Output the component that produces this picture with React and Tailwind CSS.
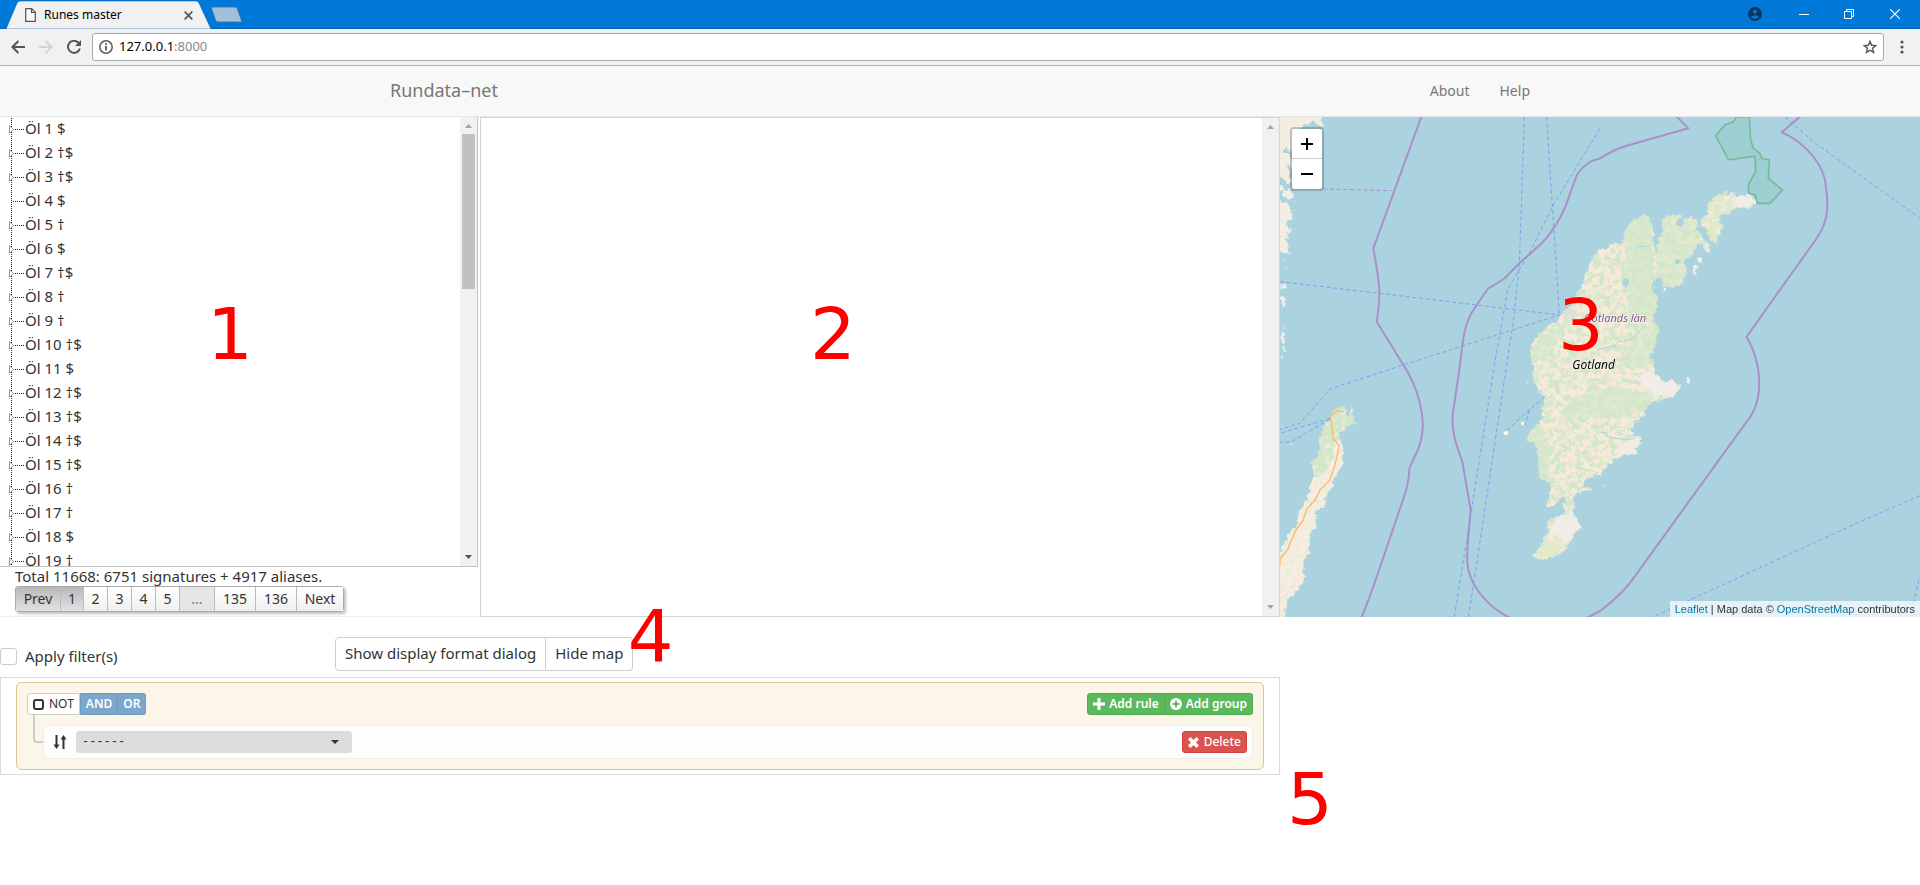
import React from 'react';

const rows = [
  ['1', '$'], ['2', '†$'], ['3', '†$'], ['4', '$', true], ['5', '†'], ['6', '$'], ['7', '†$'],
  ['8', '†'], ['9', '†'], ['10', '†$'], ['11', '$'], ['12', '†$'], ['13', '†$'], ['14', '†$'],
  ['15', '†$'], ['16', '†'], ['17', '†'], ['18', '$'], ['19', '†'],
];

const pages = [
  ['Prev', 'w-11 bg-linear-to-b from-[#b8b8b8] to-[#e2e2e2]'],
  ['1', 'w-[23px] bg-linear-to-b from-[#b8b8b8] to-[#e2e2e2]'],
  ['2', 'w-6 bg-linear-to-b from-white to-[#efefef]'],
  ['3', 'w-6 bg-linear-to-b from-white to-[#efefef]'],
  ['4', 'w-6 bg-linear-to-b from-white to-[#efefef]'],
  ['5', 'w-6 bg-linear-to-b from-white to-[#efefef]'],
  ['...', 'w-[35px] bg-[#e6e6e6] text-[#777]'],
  ['135', 'w-[41px] bg-linear-to-b from-white to-[#efefef]'],
  ['136', 'w-[41px] bg-linear-to-b from-white to-[#efefef]'],
  ['Next', 'w-[47px] bg-linear-to-b from-white to-[#efefef]'],
];

function Marker({ children, className }) {
  return (
    <span className={`pointer-events-none absolute z-10 font-['DejaVu_Sans',sans-serif] text-[72px] leading-[72px] text-[#ff0000] ${className}`}>
      {children}
    </span>
  );
}

function Scrollbar({ thumb, active }) {
  const arrow = active ? '#505050' : '#a3a3a3';
  return (
    <div className="flex w-[17px] shrink-0 flex-col items-center justify-between bg-[#f1f1f1]" aria-hidden="true">
      <div className="flex w-full flex-col items-center">
        <svg className="h-[17px] w-[17px]" viewBox="0 0 17 17"><path d="M5 11l3.5-4 3.5 4z" fill="#a3a3a3" /></svg>
        {thumb && <div className="h-[155px] w-[13px] bg-[#c1c1c1]" />}
      </div>
      <svg className="h-[17px] w-[17px]" viewBox="0 0 17 17"><path d="M5 6l3.5 4L12 6z" fill={arrow} /></svg>
    </div>
  );
}

function TitleBar() {
  return (
    <div className="flex h-[29px] items-center justify-between border-b border-[#0062b8] bg-[#0078d7]">
      <div className="flex h-full items-center">
        <div className="relative ml-1.5 h-[29px] w-[206px] shrink-0">
          <svg className="absolute inset-0 h-full w-full" viewBox="0 0 206 29" aria-hidden="true">
            <path d="M0 29 L11 3 Q12 1 14 1 H190 Q192 1 193 3 L205 29z" fill="#f1f1f1" stroke="#0063b1" strokeWidth=".6" />
          </svg>
          <div className="relative flex h-full items-center pl-[19px] pt-0.5 text-[12px] text-black">
            <svg className="h-[14px] w-[11px]" viewBox="0 0 11 14" fill="#fafafa" stroke="#555" strokeWidth="1.2" aria-hidden="true">
              <path d="M.7.7h6l3.6 3.6v9H.7zM6.5.7v3.8h3.8" />
            </svg>
            <span className="ml-2">Runes master</span>
            <button className="absolute right-4 flex h-4 w-4 items-center justify-center" aria-label="Close tab">
              <svg className="h-[9px] w-[9px]" viewBox="0 0 9 9" stroke="#555" strokeWidth="1.7"><path d="M.7.7l7.6 7.6M8.3.7L.7 8.3" /></svg>
            </button>
          </div>
        </div>
        <button aria-label="New tab" className="-ml-0.5 h-[17px] w-8 shrink-0">
          <svg className="h-[17px] w-8" viewBox="0 0 32 17"><path d="M1 1H25Q27 1 27.5 3L32 16H8Q6 16 5.5 14z" fill="#a3bfd9" stroke="#2a6fb3" strokeWidth=".8" /></svg>
        </button>
      </div>
      <div className="flex items-center pr-5">
        <button aria-label="Profile" className="mr-[37px]">
          <svg className="h-[14px] w-[14px]" viewBox="0 0 14 14"><circle cx="7" cy="7" r="7" fill="#0a3558" /><circle cx="7" cy="4.6" r="2.1" fill="#0078d7" /><path d="M2.8 10Q7 6.6 11.2 10Q7 14 2.8 10z" fill="#0078d7" /></svg>
        </button>
        <button aria-label="Minimise" className="mr-[35px]">
          <svg className="h-[10px] w-[10px]" viewBox="0 0 10 10"><path d="M0 5.5h10" stroke="#fff" /></svg>
        </button>
        <button aria-label="Restore" className="mr-[36px]">
          <svg className="h-[10px] w-[10px]" viewBox="0 0 10 10" fill="none" stroke="#fff"><path d="M.5 2.5h7v7h-7zM2.5 2.5v-2h7v7h-2" /></svg>
        </button>
        <button aria-label="Close window">
          <svg className="h-[10px] w-[10px]" viewBox="0 0 10 10" stroke="#fff" strokeWidth="1.1"><path d="M0 0l10 10M10 0L0 10" /></svg>
        </button>
      </div>
    </div>
  );
}

function Toolbar() {
  return (
    <div className="flex h-[37px] items-center border-b border-[#b3b3b3] bg-[#f1f1f1] pl-[11px]">
      <button aria-label="Back"><svg className="h-[14px] w-[14px]" viewBox="0 0 14 14" fill="none" stroke="#555" strokeWidth="2"><path d="M14 7H1.6M7.4 1L1.4 7l6 6" /></svg></button>
      <button aria-label="Forward" className="ml-[14px]"><svg className="h-[14px] w-[14px]" viewBox="0 0 14 14" fill="none" stroke="#d3d3d3" strokeWidth="2"><path d="M0 7h12.4M6.6 1l6 6-6 6" /></svg></button>
      <button aria-label="Reload" className="ml-[14px]">
        <svg className="h-[14px] w-[14px]" viewBox="0 0 14 14"><path d="M11.6 3A6 6 0 1 0 12.8 8.4" fill="none" stroke="#555" strokeWidth="2" /><path d="M14 0v6H8z" fill="#555" /></svg>
      </button>
      <div className="ml-[11px] flex h-7 flex-1 items-center rounded-[3px] border border-[#a9a9a9] bg-white pl-1.5 pr-1.5">
        <svg className="h-[14px] w-[14px]" viewBox="0 0 14 14" aria-hidden="true"><circle cx="7" cy="7" r="6.2" fill="none" stroke="#5a5a5a" strokeWidth="1.5" /><path d="M6.1 6h1.8v4.6H6.1zM6.1 3.2h1.8V5H6.1z" fill="#5a5a5a" /></svg>
        <div className="ml-1.5 flex-1 text-[13px] text-black">127.0.0.1<span className="text-[#888]">:8000</span></div>
        <button aria-label="Bookmark">
          <svg className="h-[14px] w-[14px]" viewBox="0 0 14 14" fill="none" stroke="#555" strokeWidth="1.4"><path d="M7 1.4l1.6 3.9 4.2.3-3.2 2.7 1 4.1L7 10.2l-3.6 2.2 1-4.1L1.2 5.6l4.2-.3z" /></svg>
        </button>
      </div>
      <button aria-label="Menu" className="flex w-9 justify-center">
        <svg className="h-[14px] w-1" viewBox="0 0 4 14" fill="#555"><circle cx="2" cy="2" r="1.6" /><circle cx="2" cy="7" r="1.6" /><circle cx="2" cy="12" r="1.6" /></svg>
      </button>
    </div>
  );
}

function NavBar() {
  return (
    <nav className="h-[51px] border-b border-[#e7e7e7] bg-[#f8f8f8] text-[#777]">
      <div className="mx-auto flex h-full max-w-[1170px] items-center justify-between px-[15px] pb-0.5">
        <a href="#home" className="text-[18px]">Rundata–net</a>
        <div className="flex gap-[30px] text-[14px]">
          <a href="#about">About</a>
          <a href="#help">Help</a>
        </div>
      </div>
    </nav>
  );
}

function SignatureTree() {
  return (
    <section className="relative flex min-w-0 flex-col border-b border-[#eee] pr-0.5">
      <div className="flex h-[450px] border-r border-b border-[#c4c4c4]">
        <div className="min-w-0 flex-1 overflow-hidden">
          <ul className="-mt-px">
            {rows.map(([n, marks, leaf]) => (
              <li key={n} className="flex h-6 items-center pl-[9px] leading-[22px]">
                <span className="flex h-6 w-4 shrink-0">
                  <svg className="h-6 w-4" viewBox="0 0 16 24" fill="none" aria-hidden="true">
                    <path d="M2.5 0V24" stroke="#222" strokeDasharray="1 1" />
                    <path d="M4 13.5H16" stroke="#222" strokeDasharray="1 1" />
                    {!leaf && <path d="M.5 9.5V17.5L4.5 13.5z" fill="#fff" stroke="#999" />}
                  </svg>
                </span>
                <span>Öl {n} {marks}</span>
              </li>
            ))}
          </ul>
        </div>
        <Scrollbar thumb active />
      </div>
      <div className="pl-[15px]">
        <p className="leading-[19px]">Total 11668: 6751 signatures + 4917 aliases.</p>
        <div className="inline-flex rounded-[3px] border border-[#aaa] shadow-[2px_2px_3px_rgba(0,0,0,0.25)]">
          {pages.map(([label, look], i) => (
            <button key={label} className={`h-6 text-[14px] leading-6 ${i ? 'border-l border-[#bbb]' : ''} ${look}`}>{label}</button>
          ))}
        </div>
      </div>
      <Marker className="left-[207px] top-[181px]">1</Marker>
    </section>
  );
}

const gotland = 'M720 135L710 115L712 90L690 85L665 88L655 75L625 75L608 90L610 120L598 140L592 170L588 200L584 170L580 130L568 80L550 72L530 85L505 105L490 130L488 160L460 160L440 178L415 180L400 200L385 240L365 285L345 325L325 355L305 375L290 395L260 412L235 435L215 465L210 500L222 530L220 570L235 595L252 625L245 660L245 690L210 725L203 750L228 765L238 800L235 855L250 870L272 875L272 900L258 950L280 952L300 925L315 918L312 950L310 978L275 985L262 1000L265 1025L240 1065L220 1103L260 1108L300 1090L328 1065L335 1045L350 1020L370 1018L358 1008L350 985L338 970L345 940L335 930L350 912L370 905L400 895L372 890L370 875L395 860L425 850L440 825L465 815L455 812L490 795L530 792L535 782L520 778L540 768L542 740L518 735L515 715L530 690L548 680L560 650L595 630L635 620L658 600L655 582L635 568L612 575L585 550L580 520L568 500L590 460L592 430L593 405L578 395L590 350L590 315L575 300L580 270L600 265L610 285L625 292L640 290L665 285L672 260L680 235L668 215L690 195L710 180L710 160L735 170L748 185L745 160z';
const faro = 'M890 38L880 18L860 15L845 25L825 28L815 18L828 8L812 10L800 18L798 2L785 15L760 22L745 35L742 60L750 75L730 80L722 98L735 118L750 140L768 160L775 140L790 110L775 92L790 72L805 75L820 55L850 52L870 55z';
const oland = 'M0 560L15 530L30 505L55 475L50 455L65 430L80 400L95 350L103 320L93 292L118 270L120 220L130 185L150 160L155 145L175 128L195 122L192 135L200 150L212 150L208 128L216 135L227 178L205 182L188 195L176 215L190 250L187 300L175 320L160 350L150 380L130 400L132 425L108 440L112 470L105 490L92 500L90 530L88 560L70 590L72 640L60 670L40 690L20 700L15 760L-10 760V560z';
const mainland = 'M-20 -20H120L125 8L112 22L95 18L85 30L70 28L60 45L42 50L40 90L34 110L18 98L8 110L28 122L44 148L34 158L18 145L30 168L24 182L44 205L26 204L6 186L-20 190zM50 5l14 4 10 16-10 4zM100 20l22-4 10 12-12 6zM120 42l12 4-6 12zM8 230L30 222L42 240L25 258L10 250zM-20 205L8 212L16 226L-20 232zM-20 250L24 262L38 312L22 322L34 358L18 352L28 372L8 362L-20 350zM-20 360L12 362L24 388L30 420L12 414L-20 392zM44 255l5 6-4 6zM40 285l6 3-4 4zM42 340l5 4-4 4zM12 430l7 3-4 5zM14 455l7 3-4 5zM0 512l24-3-4 7-20 2zM0 548l14-2 3 28-12 2zM12 628l6 4-5 14zM4 652l12 4-3 30-8-4zM6 690l7 2 2 18-7 2zM2 720l8 4-4 12z';

function SeaMap() {
  return (
    <svg className="block h-full w-full" viewBox="0 6 1920 1500" preserveAspectRatio="xMidYMid slice" role="img" aria-label="Map of Gotland" fill="none">
      <defs>
        <filter id="coast" x="-5%" y="-5%" width="110%" height="110%">
          <feTurbulence type="fractalNoise" baseFrequency="0.07" numOctaves="3" seed="4" result="n" />
          <feDisplacementMap in="SourceGraphic" in2="n" scale="20" xChannelSelector="R" yChannelSelector="G" />
        </filter>
        <filter id="forest" x="0" y="0" width="100%" height="100%">
          <feTurbulence type="fractalNoise" baseFrequency="0.06" numOctaves="4" seed="11" result="n" />
          <feColorMatrix in="n" type="matrix" values="0 0 0 0 0  0 0 0 0 0  0 0 0 0 0  7 0 0 0 -3.1" result="m" />
          <feComposite in="SourceGraphic" in2="m" operator="in" />
        </filter>
        <filter id="fields" x="0" y="0" width="100%" height="100%">
          <feTurbulence type="fractalNoise" baseFrequency="0.06" numOctaves="4" seed="29" result="n" />
          <feColorMatrix in="n" type="matrix" values="0 0 0 0 0  0 0 0 0 0  0 0 0 0 0  9 0 0 0 -5" result="m" />
          <feComposite in="SourceGraphic" in2="m" operator="in" />
        </filter>
        <clipPath id="island"><path d={gotland} /></clipPath>
      </defs>
      <rect x="-400" y="-400" width="2720" height="2320" fill="#aad3df" />

      <path d={mainland} fill="#f4ede4" filter="url(#coast)" />
      <g transform="translate(0 750)">
        <g filter="url(#coast)">
          <path d={oland} fill="#f6ecdf" />
          <path d="M93 292L118 270L120 220L130 185L150 160L155 145L175 128L195 122L200 150L212 150L216 135L227 178L205 182L180 205L165 235L160 280L130 330L103 340z" fill="#d3e6c8" />
          <path d={oland} fill="#e6ecd8" filter="url(#fields)" />
        </g>
        <path d="M0 602V582L22 555L45 500L70 465L80 432L105 405L120 375L150 345L165 300L178 242L160 222L157 190L150 155L170 137L192 140" stroke="#f9b96e" strokeWidth="4" />
        <path d="M670 200l14-2 2 10-14 2zM722 172l10-2 2 8-8 4zM740 50l6 2-4 4zM32 234l5 1-2 6z" fill="#fff8f0" />
      </g>

      <g transform="translate(540 225)">
        <g filter="url(#coast)">
          <path d={gotland} fill="#f8eadb" />
          <path d={gotland} fill="#d2e7c9" filter="url(#forest)" />
          <g clipPath="url(#island)">
            <path d="M490 90L570 70L590 320L580 400L510 380L500 250z" fill="#d2e7c9" opacity=".7" />
            <path d="M590 70H720V300H590z" fill="#d2e7c9" opacity=".6" />
            <path d="M290 690L330 630L420 595L480 590L560 610L600 600L560 660L480 680L400 680z" fill="#d2e7c9" opacity=".65" />
            <path d="M200 760L230 700L265 750L270 860L240 880z" fill="#d2e7c9" opacity=".7" />
            <path d="M200 520L240 440L310 400L300 440L250 500z" fill="#d2e7c9" opacity=".6" />
            <path d="M510 430L600 400L590 500L540 540L480 530z" fill="#d2e7c9" opacity=".6" />
            <path d="M525 565L580 540L680 570L640 625L590 620z" fill="#f2ece6" />
            <path d="M470 775L500 755L545 735L550 800L480 800z" fill="#f3ebe3" />
            <path d="M285 990L340 960L380 1020L320 1060L270 1030z" fill="#f2ece6" />
            <path d="M320 350l30 5-10 25-30 5z" fill="#e2dddd" />
          </g>
          <path d={faro} fill="#dfe9c9" />
          <path d={faro} fill="#f5ebdf" filter="url(#fields)" />
          <path d="M815 22L860 15L880 18L890 38L850 52L815 48z" fill="#f2ece8" />
          <path d="M240 1065L300 1045L320 1065L260 1108L220 1103z" fill="#e3e9c8" opacity=".7" />
          <path d="M712 205l14 2-4 12-12-6zM700 225l15 2-6 16-4 16-6-10zM608 290l10 2 2 12-8 4zM730 170l12 8 4 10-8-2zM678 567l14 1v7l-14 0zM562 735l6 1-1 4zM428 884l7-2-6 9zM200 575l8-2-4 8z" fill="#f8f2e4" />
        </g>
        <path d="M650 92l12-8 12 14-10 14-16-6zM490 268l12-4 6 12-10 18-10-10zM646 208h12v14h-12zM590 268l12-4 2 18-8 8z" fill="#aad3df" />
        <path d="M413 479C440 473 452 468 465 468L475 455L510 450C530 440 545 415 560 402M422 728L437 727L442 740L500 750L525 745M530 170L570 168" stroke="#b2d3df" strokeWidth="3" />
      </g>

      <path d="M1370 5L1360 20L1335 30L1307 62L1345 133C1360 138 1400 122 1425 125L1427 170L1405 208L1407 235L1425 240L1432 265H1470L1508 225L1465 190L1468 135L1445 130L1440 115L1420 100L1412 75L1408 5z" fill="#8fc9c2" fillOpacity=".5" stroke="#73bc9b" strokeWidth="5" />

      <g stroke="#aa8fc9" strokeWidth="6" strokeLinejoin="round">
        <path d="M424 5L280 400C295 490 306 520 290 620L370 750C410 810 438 900 425 965C418 1010 402 1020 388 1062C388 1110 370 1150 350 1210C315 1310 275 1440 243 1510" />
        <path d="M1190 5L1225 40L1040 92Q1000 104 960 130L935 138Q905 155 890 182L855 278Q830 335 790 380L718 445L672 492L623 522L580 585C548 635 548 690 540 750L518 900C515 970 535 1000 547 1040L572 1185C562 1310 550 1350 582 1408Q620 1475 692 1510" />
        <path d="M918 1510L960 1488Q1030 1435 1060 1390L1400 920C1452 860 1448 750 1400 665L1610 370C1650 315 1645 260 1635 195C1620 130 1560 75 1505 52L1560 5" />
      </g>
      <g stroke="#7896f2" strokeWidth="3" strokeDasharray="12 8" opacity=".85">
        <path d="M733 5L718 450L700 620L680 750L565 1510M960 40L820 270L750 410L705 485L683 525L643 750L572 1200L522 1510M800 5L838 600" />
        <path d="M0 500L450 553L838 600L370 750L150 822L60 925L0 943M150 910L0 955M150 912L35 980L0 982" />
        <path d="M1515 5L1600 80L1920 310M1920 1142L1740 1220L1110 1510M1917 1395L1890 1510" />
        <path d="M795 845L725 905L680 948M748 885L735 930" />
      </g>
      <path d="M130 222L335 227" stroke="#a58fd0" strokeWidth="3" strokeDasharray="12 8" />
      <g fontStyle="italic" stroke="#fff" strokeOpacity=".6" strokeWidth="4" paintOrder="stroke">
        <text x="912" y="620" fontSize="33" fill="#86588a">Gotlands län</text>
        <text x="877" y="761" fontSize="36" fill="#000">Gotland</text>
      </g>
    </svg>
  );
}

function MapPanel() {
  return (
    <section className="relative min-w-0 overflow-hidden">
      <SeaMap />
      <div className="absolute left-2.5 top-2.5 flex w-[34px] flex-col rounded-[4px] border-2 border-black/20 bg-white bg-clip-padding">
        <button aria-label="Zoom in" className="flex h-[30px] items-center justify-center border-b border-[#ccc]">
          <svg className="h-3 w-3" viewBox="0 0 12 12" stroke="#000" strokeWidth="2"><path d="M0 6h12M6 0v12" /></svg>
        </button>
        <button aria-label="Zoom out" className="flex h-[30px] items-center justify-center">
          <svg className="h-3 w-3" viewBox="0 0 12 12" stroke="#000" strokeWidth="2"><path d="M0 6h12" /></svg>
        </button>
      </div>
      <div className="absolute bottom-0 right-0 bg-white/70 px-[5px] font-['Liberation_Sans',sans-serif] text-[11px] leading-4 text-[#333]">
        <a href="#leaflet" className="text-[#0078a8]">Leaflet</a> | Map data © <a href="#osm" className="text-[#0078a8]">OpenStreetMap</a> contributors
      </div>
      <Marker className="left-[278px] top-[172px]">3</Marker>
    </section>
  );
}

function FilterBuilder() {
  return (
    <section className="w-2/3 border border-[#ddd] px-[15px] py-1">
      <div className="rounded-[5px] border border-[#dcc896] bg-[#fcf6e8] p-2.5">
        <div className="flex items-start justify-between text-[12px] leading-5">
          <div className="flex">
            <button className="flex items-center gap-[5px] rounded-l-[3px] border border-[#ccc] bg-white px-[5px] text-[#333]">
              <span className="h-[11px] w-[11px] rounded-[3px] border-2 border-[#333]" />NOT
            </button>
            <button className="border border-[#6c9cc4] bg-[#7ba7cc] px-[5px] font-semibold text-white">AND</button>
            <button className="rounded-r-[3px] border border-l-0 border-[#6c9cc4] bg-[#7ba7cc] px-[5px] font-semibold text-white">OR</button>
          </div>
          <div className="flex font-semibold text-white">
            <button className="flex items-center gap-1 rounded-l-[3px] border border-[#4cae4c] bg-[#5cb85c] px-[5px]">
              <svg className="h-3 w-3" viewBox="0 0 12 12" fill="#fff"><path d="M4.5 0h3v4.500H12v3H7.500V12h-3V7.500H0v-3h4.500z" /></svg>Add rule
            </button>
            <button className="flex items-center gap-1 rounded-r-[3px] border border-l-0 border-[#4cae4c] bg-[#5cb85c] px-[5px]">
              <svg className="h-3 w-3" viewBox="0 0 12 12"><circle cx="6" cy="6" r="6" fill="#fff" /><path d="M5 2.8h2V5h2.200v2H7v2.200H5V7H2.800V5H5z" fill="#5cb85c" /></svg>Add group
            </button>
          </div>
        </div>
        <div className="mt-2.5 flex items-start pl-1.5">
          <div className="-mt-2.5 h-7 w-2.5 shrink-0 rounded-bl-[4px] border-b-2 border-l-2 border-[#ccc]" />
          <div className="flex flex-1 items-center justify-between rounded-[4px] border border-[#eee] bg-[#fffefe] px-[5px] py-[5px]">
            <div className="flex items-center pl-1">
              <svg className="mr-[9px] h-[14px] w-[14px]" viewBox="0 0 14 14" aria-hidden="true">
                <path d="M3.500 0v10M10.500 14V4" stroke="#333" strokeWidth="2" /><path d="M.5 9.500h6L3.500 14zM7.500 4.500h6L10.500 0z" fill="#333" />
              </svg>
              <div className="flex w-[276px] items-center rounded-[3px] bg-[#dcdcdc]">
                <select aria-label="Rule field" className="h-[22px] flex-1 appearance-none bg-transparent px-1.5 font-['Liberation_Mono',monospace] text-[12px] leading-5 text-[#333]">
                  <option>------</option>
                </select>
                <svg className="pointer-events-none -ml-5 mr-[13px] h-1 w-2" viewBox="0 0 8 4"><path d="M0 0h8L4 4z" fill="#333" /></svg>
              </div>
            </div>
            <button className="flex items-center gap-[5px] rounded-[3px] border border-[#d43f3a] bg-[#d9534f] px-[5px] text-[12px] font-medium leading-5 text-white">
              <svg className="h-[11px] w-[11px]" viewBox="0 0 11 11" stroke="#fff" strokeWidth="3.6"><path d="M1.300 1.300l8.400 8.400M9.700 1.300L1.300 9.700" /></svg>Delete
            </button>
          </div>
        </div>
      </div>
    </section>
  );
}

export default function App() {
  return (
    <div className="min-h-screen bg-white font-['Noto_Sans','Open_Sans',sans-serif] text-[15px] text-[#333]">
      <TitleBar />
      <Toolbar />
      <NavBar />
      <main>
        <div className="grid h-[500px] grid-cols-[3fr_5fr_4fr]">
          <SignatureTree />
          <section className="relative flex min-w-0 justify-end border border-[#d4d4d4]">
            <Scrollbar />
            <Marker className="left-[329px] top-[180px]">2</Marker>
          </section>
          <MapPanel />
        </div>
        <div className="flex h-[60px] items-start pt-5">
          <label className="flex w-[335px] items-center gap-2 pt-2">
            <input type="checkbox" className="h-[17px] w-[17px] appearance-none rounded-[3px] border border-[#ccc] bg-white" />
            Apply filter(s)
          </label>
          <div className="relative flex">
            <button className="h-[34px] rounded-l-[4px] border border-[#ccc] bg-white px-[9px] pb-0.5">Show display format dialog</button>
            <button className="h-[34px] rounded-r-[4px] border border-l-0 border-[#ccc] bg-white px-[9px] pb-0.5">Hide map</button>
            <Marker className="-right-10 -top-[37px]">4</Marker>
          </div>
        </div>
        <div className="relative">
          <FilterBuilder />
          <Marker className="left-2/3 top-[86px] ml-[7px]">5</Marker>
        </div>
      </main>
    </div>
  );
}
